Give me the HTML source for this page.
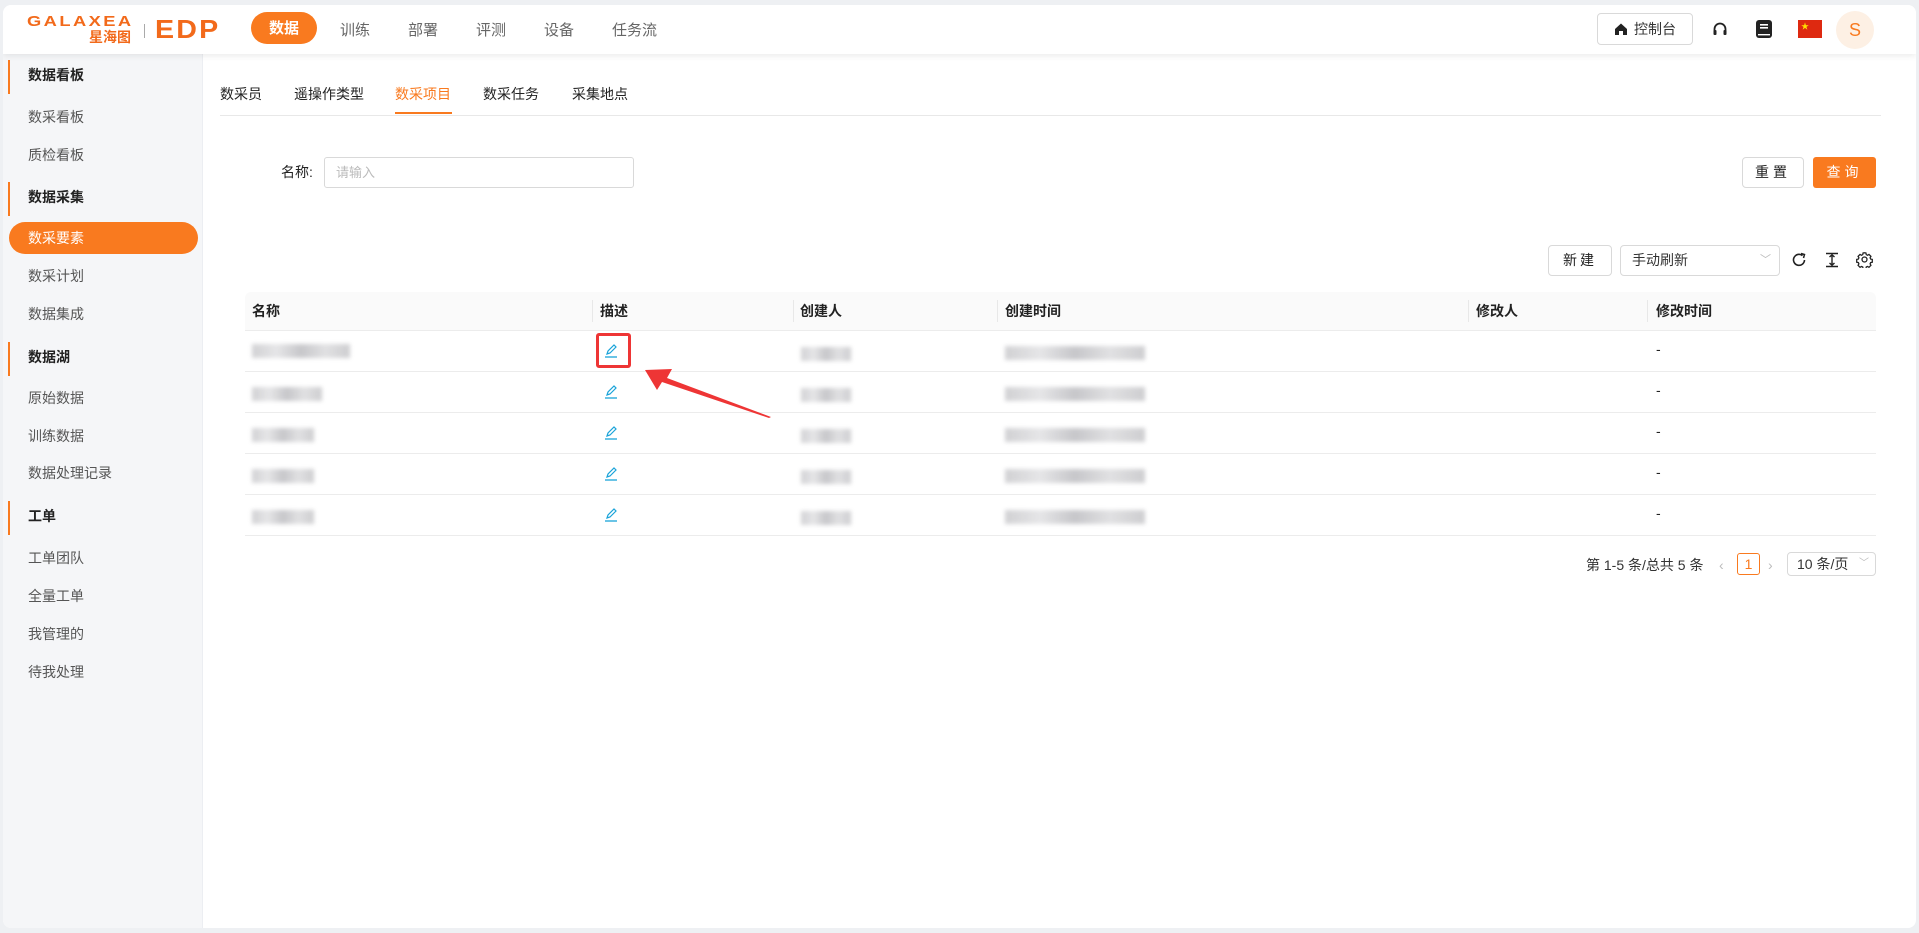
<!DOCTYPE html>
<html><head><meta charset="utf-8"><style>
*{box-sizing:border-box;margin:0;padding:0}
body{width:1919px;height:933px;background:#eef0f3;font-family:"Liberation Sans","Noto Sans CJK SC",sans-serif;font-size:14px;color:#222;position:relative;overflow:hidden}
.abs{position:absolute}
.card{position:absolute;left:3px;top:5px;width:1913px;height:923px;background:#fff;border-radius:8px;overflow:hidden}
.hdr{position:absolute;left:0;top:0;width:1913px;height:49px;background:#fff;box-shadow:0 2px 6px rgba(0,0,0,.08);z-index:2}
.side{position:absolute;left:0;top:49px;width:200px;height:880px;background:#f5f6f8;border-right:1px solid #eceef2}
.si{position:absolute;left:25px;font-size:14px;color:#555;line-height:20px}
.sh{font-weight:bold;color:#222}
.bar{position:absolute;left:5px;width:2px;height:34px;background:#f97a1f}
.nav{position:absolute;top:10px;font-size:15px;color:#666;line-height:32px}
.blur{position:absolute;height:14px;background:linear-gradient(90deg,#c9c9cc,#e2e2e4,#bdbdc1,#dcdcde,#c5c5c8);filter:blur(2px);opacity:.85}
.th{position:absolute;top:292px;font-weight:bold;font-size:14px;line-height:38px}
.dv{position:absolute;top:300px;width:1px;height:22px;background:#e8e8e8}
.rl{position:absolute;left:245px;width:1631px;height:1px;background:#ececec}
.btn{position:absolute;border:1px solid #d9d9d9;border-radius:4px;background:#fff;text-align:center;font-size:14px}
</style></head><body>
<div class="card">
<div class="hdr">
  <div class="abs" style="left:24px;top:9px;font-weight:bold;font-size:15px;letter-spacing:2px;color:#f26a1b;line-height:15px;transform:scaleX(1.22);transform-origin:left">GALAXEA</div>
  <div class="abs" style="left:86px;top:24px;font-weight:bold;font-size:14px;color:#f26a1b;line-height:16px">星海图</div>
  <div class="abs" style="left:141px;top:19px;width:1px;height:14px;background:#aaa"></div>
  <div class="abs" style="left:152px;top:11px;font-size:26px;color:#f26a1b;line-height:26px;letter-spacing:2px;font-weight:bold;transform:scaleX(1.1);transform-origin:left">EDP</div>
  <div class="abs" style="left:248px;top:7px;width:66px;height:32px;border-radius:16px;background:#f97a1f;color:#fff;font-size:15px;font-weight:bold;text-align:center;line-height:33px">数据</div>
  <div class="nav" style="left:337px">训练</div>
  <div class="nav" style="left:405px">部署</div>
  <div class="nav" style="left:473px">评测</div>
  <div class="nav" style="left:541px">设备</div>
  <div class="nav" style="left:609px">任务流</div>
  <div class="btn" style="left:1594px;top:8px;width:96px;height:32px;line-height:30px;color:#333">
    <svg width="14" height="14" viewBox="0 0 14 14" style="vertical-align:-2px;margin-right:6px"><path d="M1 7L7 1.5 13 7V13H9V9H5V13H1Z" fill="#222"/></svg>控制台</div>
  <svg class="abs" style="left:1709px;top:16px" width="16" height="16" viewBox="0 0 16 16"><path d="M2.5 10V8a5.5 5.5 0 0 1 11 0v2" fill="none" stroke="#222" stroke-width="1.8"/><rect x="1.5" y="9" width="3" height="5" rx="1" fill="#222"/><rect x="11.5" y="9" width="3" height="5" rx="1" fill="#222"/></svg>
  <svg class="abs" style="left:1752px;top:14px" width="18" height="20" viewBox="0 0 18 20"><rect x="1" y="1" width="16" height="18" rx="3" fill="#222"/><rect x="5" y="5" width="8" height="1.6" fill="#fff"/><rect x="5" y="8" width="8" height="1.6" fill="#fff"/><rect x="3" y="15" width="12" height="1.4" fill="#fff"/></svg>
  <div class="abs" style="left:1795px;top:15px;width:24px;height:18px;background:#de2910"><span style="position:absolute;left:3px;top:1px;color:#ffde00;font-size:8px">★</span></div>
  <div class="abs" style="left:1833px;top:6px;width:38px;height:38px;border-radius:50%;background:#fdf0e4;color:#f97a1f;font-size:18px;text-align:center;line-height:38px">S</div>
</div>
<div class="side">
  <div class="bar" style="top:6px"></div><div class="si sh" style="top:11px">数据看板</div>
  <div class="si" style="top:53px">数采看板</div>
  <div class="si" style="top:91px">质检看板</div>
  <div class="bar" style="top:128px"></div><div class="si sh" style="top:133px">数据采集</div>
  <div class="abs" style="left:6px;top:168px;width:189px;height:32px;border-radius:16px;background:#f97a1f"></div>
  <div class="si" style="top:174px;color:#fff">数采要素</div>
  <div class="si" style="top:212px">数采计划</div>
  <div class="si" style="top:250px">数据集成</div>
  <div class="bar" style="top:288px"></div><div class="si sh" style="top:293px">数据湖</div>
  <div class="si" style="top:334px">原始数据</div>
  <div class="si" style="top:372px">训练数据</div>
  <div class="si" style="top:409px">数据处理记录</div>
  <div class="bar" style="top:447px"></div><div class="si sh" style="top:452px">工单</div>
  <div class="si" style="top:494px">工单团队</div>
  <div class="si" style="top:532px">全量工单</div>
  <div class="si" style="top:570px">我管理的</div>
  <div class="si" style="top:608px">待我处理</div>
</div>
</div>
<div class="abs" style="left:220px;top:84px;font-size:14px;line-height:20px">数采员</div>
<div class="abs" style="left:294px;top:84px;line-height:20px">遥操作类型</div>
<div class="abs" style="left:395px;top:84px;line-height:20px;color:#f97a1f">数采项目</div>
<div class="abs" style="left:395px;top:112px;width:57px;height:2px;background:#f97a1f"></div>
<div class="abs" style="left:483px;top:84px;line-height:20px">数采任务</div>
<div class="abs" style="left:572px;top:84px;line-height:20px">采集地点</div>
<div class="abs" style="left:220px;top:115px;width:1661px;height:1px;background:#e8e8e8"></div>
<div class="abs" style="left:281px;top:162px;line-height:20px">名称:</div>
<div class="abs" style="left:324px;top:157px;width:310px;height:31px;border:1px solid #d9d9d9;border-radius:3px;color:#bbb;padding-left:11px;line-height:29px;font-size:13px">请输入</div>
<div class="btn" style="left:1742px;top:157px;width:62px;height:31px;line-height:29px;letter-spacing:4px">重置</div>
<div class="abs" style="left:1813px;top:157px;width:63px;height:31px;background:#f97a1f;border-radius:3px;color:#fff;text-align:center;line-height:31px;letter-spacing:4px">查询</div>
<div class="btn" style="left:1548px;top:245px;width:64px;height:31px;line-height:29px;letter-spacing:3px">新建</div>
<div class="btn" style="left:1620px;top:245px;width:160px;height:31px;line-height:29px;text-align:left;padding-left:11px;color:#333">手动刷新<span style="position:absolute;right:8px;top:0;color:#bbb;font-size:11px">﹀</span></div>
<svg class="abs" style="left:1791px;top:252px" width="16" height="16" viewBox="0 0 16 16"><path d="M13.5 8A5.5 5.5 0 1 1 11.5 3.6" fill="none" stroke="#222" stroke-width="1.6"/><path d="M10 1.5L13.5 2.5 12.5 6" fill="none" stroke="#222" stroke-width="1.5"/></svg>
<svg class="abs" style="left:1824px;top:252px" width="16" height="16" viewBox="0 0 16 16"><path d="M2 1.5H14M2 14.5H14M8 3V13M5.5 5L8 2.8 10.5 5M5.5 11L8 13.2 10.5 11" fill="none" stroke="#222" stroke-width="1.4"/></svg>
<svg class="abs" style="left:1856px;top:251px" width="17" height="17" viewBox="0 0 24 24"><path d="M12 2.5l2 .3.5 2.3 1.8.9 2-1.2 2.8 2.8-1.2 2 .8 1.8 2.3.5v4l-2.3.5-.8 1.8 1.2 2-2.8 2.8-2-1.2-1.8.8-.5 2.3h-4l-.5-2.3-1.8-.8-2 1.2-2.8-2.8 1.2-2-.8-1.8-2.3-.5v-4l2.3-.5.8-1.8-1.2-2 2.8-2.8 2 1.2 1.8-.9.5-2.3z" fill="none" stroke="#222" stroke-width="1.8"/><circle cx="12" cy="12" r="3.5" fill="none" stroke="#222" stroke-width="1.8"/></svg>
<div class="abs" style="left:245px;top:292px;width:1631px;height:38px;background:#fafafa;border-radius:6px 6px 0 0"></div>
<div class="th" style="left:252px">名称</div>
<div class="dv" style="left:592px"></div><div class="th" style="left:600px">描述</div>
<div class="dv" style="left:793px"></div><div class="th" style="left:800px">创建人</div>
<div class="dv" style="left:997px"></div><div class="th" style="left:1005px">创建时间</div>
<div class="dv" style="left:1468px"></div><div class="th" style="left:1476px">修改人</div>
<div class="dv" style="left:1647px"></div><div class="th" style="left:1656px">修改时间</div>
<div class="rl" style="top:330px"></div>
<div class="rl" style="top:371px"></div>
<div class="rl" style="top:412px"></div>
<div class="rl" style="top:453px"></div>
<div class="rl" style="top:494px"></div>
<div class="rl" style="top:535px"></div>
<div class="blur" style="left:252px;top:344px;width:98px"></div>
<div class="blur" style="left:252px;top:387px;width:70px"></div>
<div class="blur" style="left:252px;top:428px;width:62px"></div>
<div class="blur" style="left:252px;top:469px;width:62px"></div>
<div class="blur" style="left:252px;top:510px;width:62px"></div>
<div class="blur" style="left:801px;top:347px;width:50px"></div>
<div class="blur" style="left:801px;top:388px;width:50px"></div>
<div class="blur" style="left:801px;top:429px;width:50px"></div>
<div class="blur" style="left:801px;top:470px;width:50px"></div>
<div class="blur" style="left:801px;top:511px;width:50px"></div>
<div class="blur" style="left:1005px;top:346px;width:140px"></div>
<div class="blur" style="left:1005px;top:387px;width:140px"></div>
<div class="blur" style="left:1005px;top:428px;width:140px"></div>
<div class="blur" style="left:1005px;top:469px;width:140px"></div>
<div class="blur" style="left:1005px;top:510px;width:140px"></div>
<div class="abs" style="left:1656px;top:341px">-</div>
<div class="abs" style="left:1656px;top:382px">-</div>
<div class="abs" style="left:1656px;top:423px">-</div>
<div class="abs" style="left:1656px;top:464px">-</div>
<div class="abs" style="left:1656px;top:505px">-</div>
<svg class="abs" style="left:604px;top:343px" width="14" height="16" viewBox="0 0 14 16"><path d="M3 11L4 8 10 2 12 4 6 10Z" fill="none" stroke="#1aa3d9" stroke-width="1.2"/><path d="M1 14H13" stroke="#1aa3d9" stroke-width="1.3"/></svg>
<svg class="abs" style="left:604px;top:384px" width="14" height="16" viewBox="0 0 14 16"><path d="M3 11L4 8 10 2 12 4 6 10Z" fill="none" stroke="#1aa3d9" stroke-width="1.2"/><path d="M1 14H13" stroke="#1aa3d9" stroke-width="1.3"/></svg>
<svg class="abs" style="left:604px;top:425px" width="14" height="16" viewBox="0 0 14 16"><path d="M3 11L4 8 10 2 12 4 6 10Z" fill="none" stroke="#1aa3d9" stroke-width="1.2"/><path d="M1 14H13" stroke="#1aa3d9" stroke-width="1.3"/></svg>
<svg class="abs" style="left:604px;top:466px" width="14" height="16" viewBox="0 0 14 16"><path d="M3 11L4 8 10 2 12 4 6 10Z" fill="none" stroke="#1aa3d9" stroke-width="1.2"/><path d="M1 14H13" stroke="#1aa3d9" stroke-width="1.3"/></svg>
<svg class="abs" style="left:604px;top:507px" width="14" height="16" viewBox="0 0 14 16"><path d="M3 11L4 8 10 2 12 4 6 10Z" fill="none" stroke="#1aa3d9" stroke-width="1.2"/><path d="M1 14H13" stroke="#1aa3d9" stroke-width="1.3"/></svg>
<div class="abs" style="left:596px;top:333px;width:35px;height:35px;border:3px solid #ee3535;border-radius:3px"></div>
<svg class="abs" style="left:630px;top:360px" width="150" height="60" viewBox="0 0 150 60"><path d="M15 10L42 9 37 18 141 57 139 58 32 22 27 30Z" fill="#ee3535"/></svg>
<div class="abs" style="left:1586px;top:555px;line-height:20px;color:#333">第 1-5 条/总共 5 条</div>
<div class="abs" style="left:1719px;top:555px;line-height:20px;color:#bbb">‹</div>
<div class="abs" style="left:1737px;top:553px;width:23px;height:22px;border:1px solid #f97a1f;border-radius:3px;color:#f97a1f;text-align:center;line-height:20px">1</div>
<div class="abs" style="left:1768px;top:555px;line-height:20px;color:#bbb">›</div>
<div class="btn" style="left:1787px;top:552px;width:89px;height:24px;line-height:22px;text-align:left;padding-left:9px;color:#333">10 条/页<span style="position:absolute;right:6px;color:#bbb;font-size:10px">﹀</span></div>
</body></html>
